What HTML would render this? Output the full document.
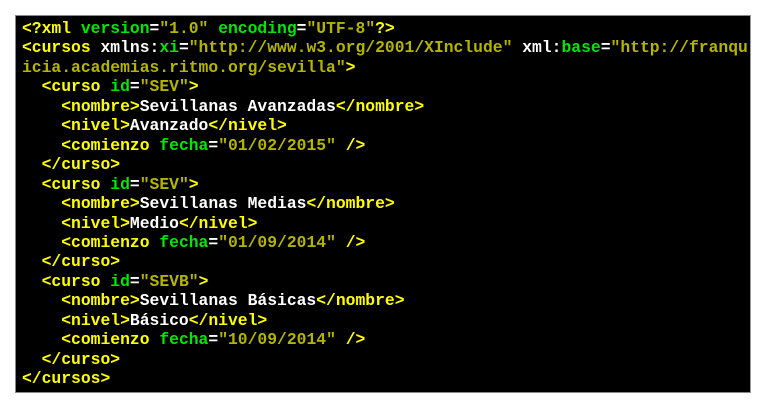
<!DOCTYPE html>
<html><head><meta charset="utf-8"><style>
html,body{margin:0;padding:0;background:#fff;width:768px;height:408px;overflow:hidden}
.box{position:absolute;left:15px;top:15px;width:734px;height:376px;background:#000;border:1px solid #888;border-right-color:#999}
pre{margin:0;position:absolute;left:6px;top:3px;font-family:"Liberation Mono",monospace;font-weight:bold;font-size:16.35px;line-height:19.45px;color:#fff;white-space:pre}
.t{color:#ffff00}.a{color:#00e600}.v{color:#b4b400}.w{color:#fff}
</style></head><body><div class="box"><pre><span class="t">&lt;?xml</span> <span class="a">version</span>=<span class="v">"1.0"</span> <span class="a">encoding</span>=<span class="v">"UTF-8"</span><span class="t">?&gt;</span>
<span class="t">&lt;cursos</span> xmlns:<span class="a">xi</span>=<span class="v">"http://www.w3.org/2001/XInclude"</span> xml:<span class="a">base</span>=<span class="v">"http://franqu</span>
<span class="v">icia.academias.ritmo.org/sevilla"</span><span class="t">&gt;</span>
  <span class="t">&lt;curso</span> <span class="a">id</span>=<span class="v">"SEV"</span><span class="t">&gt;</span>
    <span class="t">&lt;nombre&gt;</span>Sevillanas Avanzadas<span class="t">&lt;/nombre&gt;</span>
    <span class="t">&lt;nivel&gt;</span>Avanzado<span class="t">&lt;/nivel&gt;</span>
    <span class="t">&lt;comienzo</span> <span class="a">fecha</span>=<span class="v">"01/02/2015"</span> <span class="t">/&gt;</span>
  <span class="t">&lt;/curso&gt;</span>
  <span class="t">&lt;curso</span> <span class="a">id</span>=<span class="v">"SEV"</span><span class="t">&gt;</span>
    <span class="t">&lt;nombre&gt;</span>Sevillanas Medias<span class="t">&lt;/nombre&gt;</span>
    <span class="t">&lt;nivel&gt;</span>Medio<span class="t">&lt;/nivel&gt;</span>
    <span class="t">&lt;comienzo</span> <span class="a">fecha</span>=<span class="v">"01/09/2014"</span> <span class="t">/&gt;</span>
  <span class="t">&lt;/curso&gt;</span>
  <span class="t">&lt;curso</span> <span class="a">id</span>=<span class="v">"SEVB"</span><span class="t">&gt;</span>
    <span class="t">&lt;nombre&gt;</span>Sevillanas Básicas<span class="t">&lt;/nombre&gt;</span>
    <span class="t">&lt;nivel&gt;</span>Básico<span class="t">&lt;/nivel&gt;</span>
    <span class="t">&lt;comienzo</span> <span class="a">fecha</span>=<span class="v">"10/09/2014"</span> <span class="t">/&gt;</span>
  <span class="t">&lt;/curso&gt;</span>
<span class="t">&lt;/cursos&gt;</span></pre></div></body></html>
